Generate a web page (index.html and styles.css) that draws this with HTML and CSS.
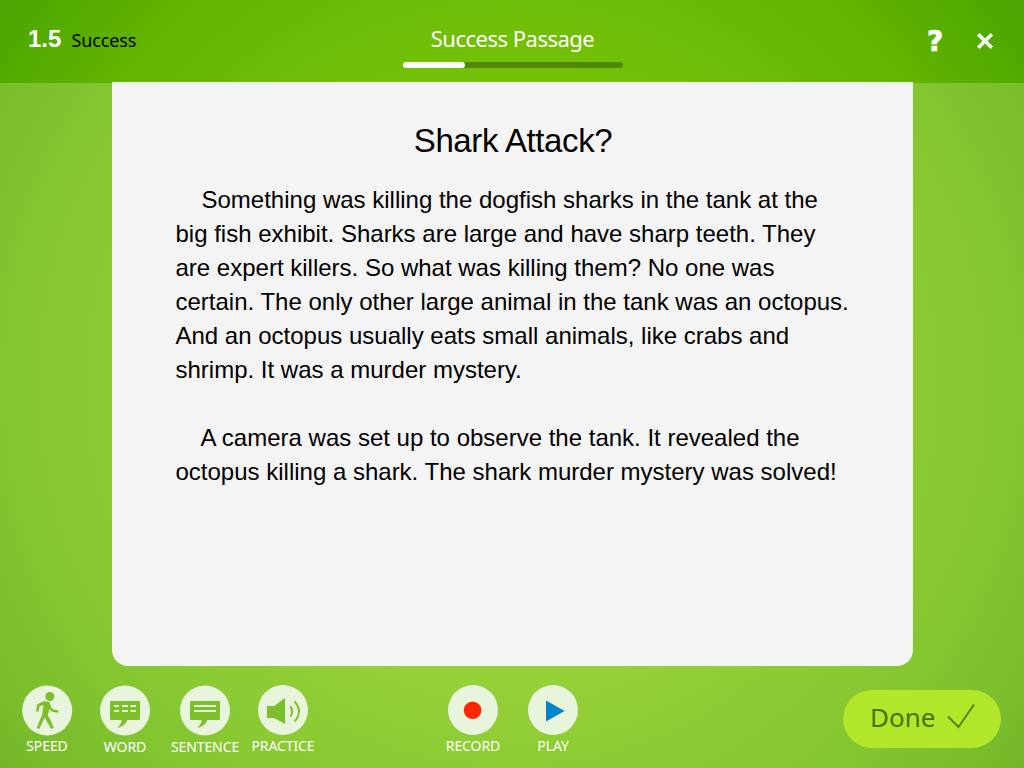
FILE: index.html
```html
<!DOCTYPE html>
<html lang="en">

<head>
  <meta charset="utf-8">
  <title>Success Passage</title>
  <link rel="stylesheet" href="styles.css">
</head>

<body>
  <div class="app">
    <header class="header">
      <div class="lesson">
        <span class="lesson-number">1.5</span>
        <span class="lesson-name">Success</span>
      </div>
      <div class="header-center">
        <h1 class="header-title">Success Passage</h1>
        <div class="progress">
          <div class="progress-bar" style="width: 28.2%"></div>
        </div>
      </div>
      <div class="header-buttons">
        <button class="icon-button help">?</button>
        <button class="icon-button" aria-label="Close">
          <svg width="20" height="28" viewBox="0 0 20 28">
            <path d="M3.2 7.2 L16.8 20.8 M16.8 7.2 L3.2 20.8" stroke="#fff" stroke-width="3.6" />
          </svg>
        </button>
      </div>
    </header>

    <main class="passage">
      <h2 class="passage-title">Shark Attack?</h2>
      <p>Something was killing the dogfish sharks in the tank at the<br>
        big fish exhibit. Sharks are large and have sharp teeth. They<br>
        are expert killers. So what was killing them? No one was<br>
        certain. The only other large animal in the tank was an octopus.<br>
        And an octopus usually eats small animals, like crabs and<br>
        shrimp. It was a murder mystery.</p>
      <p>A camera was set up to observe the tank. It revealed the<br>
        octopus killing a shark. The shark murder mystery was solved!</p>
    </main>

    <footer class="toolbar">
      <div class="tools">
        <button class="tool">
          <svg class="tool-icon" viewBox="0 0 50 50">
            <circle class="disc" cx="25.2" cy="25.5" r="25" />
            <circle class="shape" cx="27.8" cy="11.5" r="4.5" />
            <path class="shape" d="M20.5 16.5 Q25 15.5 27.5 17.5 L29.5 23 L31.5 24.5 L36.7 25.5 L36.2 27.8 L30.5 27 L27.3 24.5 L25.8 30.5 L28 34 L31.8 42.8 L29.2 44 L22.5 32.5 L17.3 44 L14.8 42.8 L20 30 L21.5 20 L17.5 21.5 L16.5 26.8 L14 26.5 L15 19.5 Z" />
          </svg>
          <span>SPEED</span>
        </button>
        <button class="tool tool-word">
          <svg class="tool-icon" viewBox="0 0 50 50">
            <circle class="disc" cx="25" cy="25.5" r="25" />
            <path class="shape" d="M11 16 H39 Q40 16 40 17 V34 Q40 35 39 35 H27.5 Q24.5 41.5 17 43 Q21.5 39.5 21.7 35 H11 Q10 35 10 34 V17 Q10 16 11 16 Z" />
            <path class="rule" d="M14 21 H19 M22 21 H28 M30.5 21 H36 M14 26 H19 M22 26 H28 M30.5 26 H36" />
          </svg>
          <span>WORD</span>
        </button>
        <button class="tool tool-sentence">
          <svg class="tool-icon" viewBox="0 0 50 50">
            <circle class="disc" cx="25" cy="25.5" r="25" />
            <path class="shape" d="M11 16 H39 Q40 16 40 17 V34 Q40 35 39 35 H27.5 Q24.5 41.5 17 43 Q21.5 39.5 21.7 35 H11 Q10 35 10 34 V17 Q10 16 11 16 Z" />
            <path class="rule" d="M14 21 H36 M14 26 H36" />
          </svg>
          <span>SENTENCE</span>
        </button>
        <button class="tool tool-practice">
          <svg class="tool-icon" viewBox="0 0 50 50">
            <circle class="disc" cx="25" cy="25" r="25" />
            <path class="shape" d="M9 21 H16 L27 13 V39 L16 33 H9 Z" />
            <path class="wave" d="M32.3 21.3 Q36 26.5 32.3 31.7" />
            <path class="wave" d="M36.5 16.5 Q45.5 26.5 36.5 36.5" />
          </svg>
          <span>PRACTICE</span>
        </button>
      </div>

      <div class="tools tools-audio">
        <button class="tool">
          <svg class="tool-icon" viewBox="0 0 50 50">
            <circle class="disc" cx="25" cy="25" r="25" />
            <circle cx="24.6" cy="25.3" r="8.8" fill="#ff2600" />
          </svg>
          <span>RECORD</span>
        </button>
        <button class="tool">
          <svg class="tool-icon" viewBox="0 0 50 50">
            <circle class="disc" cx="25" cy="25" r="25" />
            <path d="M18 15.5 L36.6 26 L18 36.5 Z" fill="#0085cd" />
          </svg>
          <span>PLAY</span>
        </button>
      </div>

      <button class="done">
        <span>Done</span>
        <svg width="28" height="26" viewBox="0 0 28 26">
          <path d="M1 12.5 L11.5 23 L27 0.5" fill="none" stroke="#4f7f0a" stroke-width="1.8" />
        </svg>
      </button>
    </footer>
  </div>
</body>

</html>
```

FILE: styles.css
```css
* {
  box-sizing: border-box;
}

body {
  margin: 0;
  font-family: "Noto Sans", sans-serif;
}

button {
  margin: 0;
  padding: 0;
  border: none;
  background: none;
  color: inherit;
  font-family: inherit;
  cursor: pointer;
}

.app {
  display: flex;
  flex-direction: column;
  width: 1024px;
  height: 768px;
  overflow: hidden;
  background: radial-gradient(circle at 512px 384px, #9ad63b 0, #94d037 300px, #84c630 500px, #73b829 640px);
}

/* Header */
.header {
  display: grid;
  grid-template-columns: 1fr 220px 1fr;
  flex: none;
  height: 83px;
  padding: 0 29px 0 28px;
  color: #fff;
  background: radial-gradient(circle at 512px 384px, #76c20a 0, #76c20a 300px, #64b600 480px, #4da700 620px);
}

.lesson {
  display: flex;
  align-items: baseline;
  gap: 10px;
  padding-top: 25px;
}

.lesson-number {
  font: bold 24px/28px "Liberation Sans", sans-serif;
}

.lesson-name {
  color: #000;
  font-size: 18px;
  letter-spacing: -0.1px;
}

.header-center {
  margin: 0 -1px 0 1px;
  padding-top: 23px;
  text-align: center;
}

.header-title {
  margin: 0 0 9px;
  font-size: 22px;
  font-weight: normal;
  line-height: 30px;
  letter-spacing: -0.5px;
  white-space: nowrap;
}

.progress {
  height: 6px;
  border-radius: 3px;
  background: #508806;
}

.progress-bar {
  height: 6px;
  border-radius: 3px;
  background: #fff;
}

.header-buttons {
  display: flex;
  justify-content: flex-end;
  gap: 30px;
  padding-top: 27px;
}

.icon-button {
  width: 20px;
  height: 28px;
}

.icon-button svg {
  display: block;
}

.help {
  height: 30px;
  font: bold 28px/30px "DejaVu Sans", sans-serif;
  -webkit-text-stroke: 0.7px #fff;
}

/* Passage */
.passage {
  flex: none;
  align-self: center;
  width: 801px;
  height: 584px;
  margin-top: -1px;
  padding: 39px 0 0 64px;
  border-radius: 0 0 16px 16px;
  background: #f4f4f4;
  color: #000;
  font-family: "Liberation Sans", Arial, sans-serif;
}

.passage-title {
  margin: 0 62px 22px 0;
  font-size: 33px;
  font-weight: normal;
  line-height: 40px;
  letter-spacing: -0.4px;
  text-align: center;
}

.passage p {
  margin: 0 0 34px;
  font-size: 24px;
  line-height: 34px;
  text-indent: 26px;
  white-space: nowrap;
}

.passage p:last-child {
  text-indent: 25px;
}

/* Toolbar */
.toolbar {
  display: flex;
  flex: none;
  height: 102px;
  padding: 19px 23px 0 8px;
}

.tools {
  display: flex;
  color: #fff;
}

.tools-audio {
  margin-left: 113px;
}

.tool {
  display: flex;
  flex-direction: column;
  align-items: center;
  width: 78px;
  height: 76px;
  font-size: 14px;
  line-height: 20px;
  letter-spacing: -0.1px;
}

.tool-word span,
.tool-sentence span {
  padding-top: 1px;
}

.tool-sentence {
  width: 82px;
}

.tool-practice {
  width: 74px;
}

.tools-audio .tool {
  width: 80px;
}

.tool-icon {
  width: 50px;
  height: 50px;
  margin-bottom: 1px;
  overflow: visible;
}

.disc {
  fill: #e9f4dc;
}

.shape {
  fill: #7dbf2b;
}

.rule {
  stroke: #e9f4dc;
  stroke-width: 2;
}

.wave {
  fill: none;
  stroke: #7dbf2b;
  stroke-width: 2;
}

.done {
  display: flex;
  align-items: center;
  gap: 12px;
  width: 158px;
  height: 58px;
  margin: 5px 0 0 auto;
  padding: 0 0 5px 27px;
  border-radius: 29px;
  background: #b2e62a;
  color: #467300;
  font-size: 26px;
}
```
